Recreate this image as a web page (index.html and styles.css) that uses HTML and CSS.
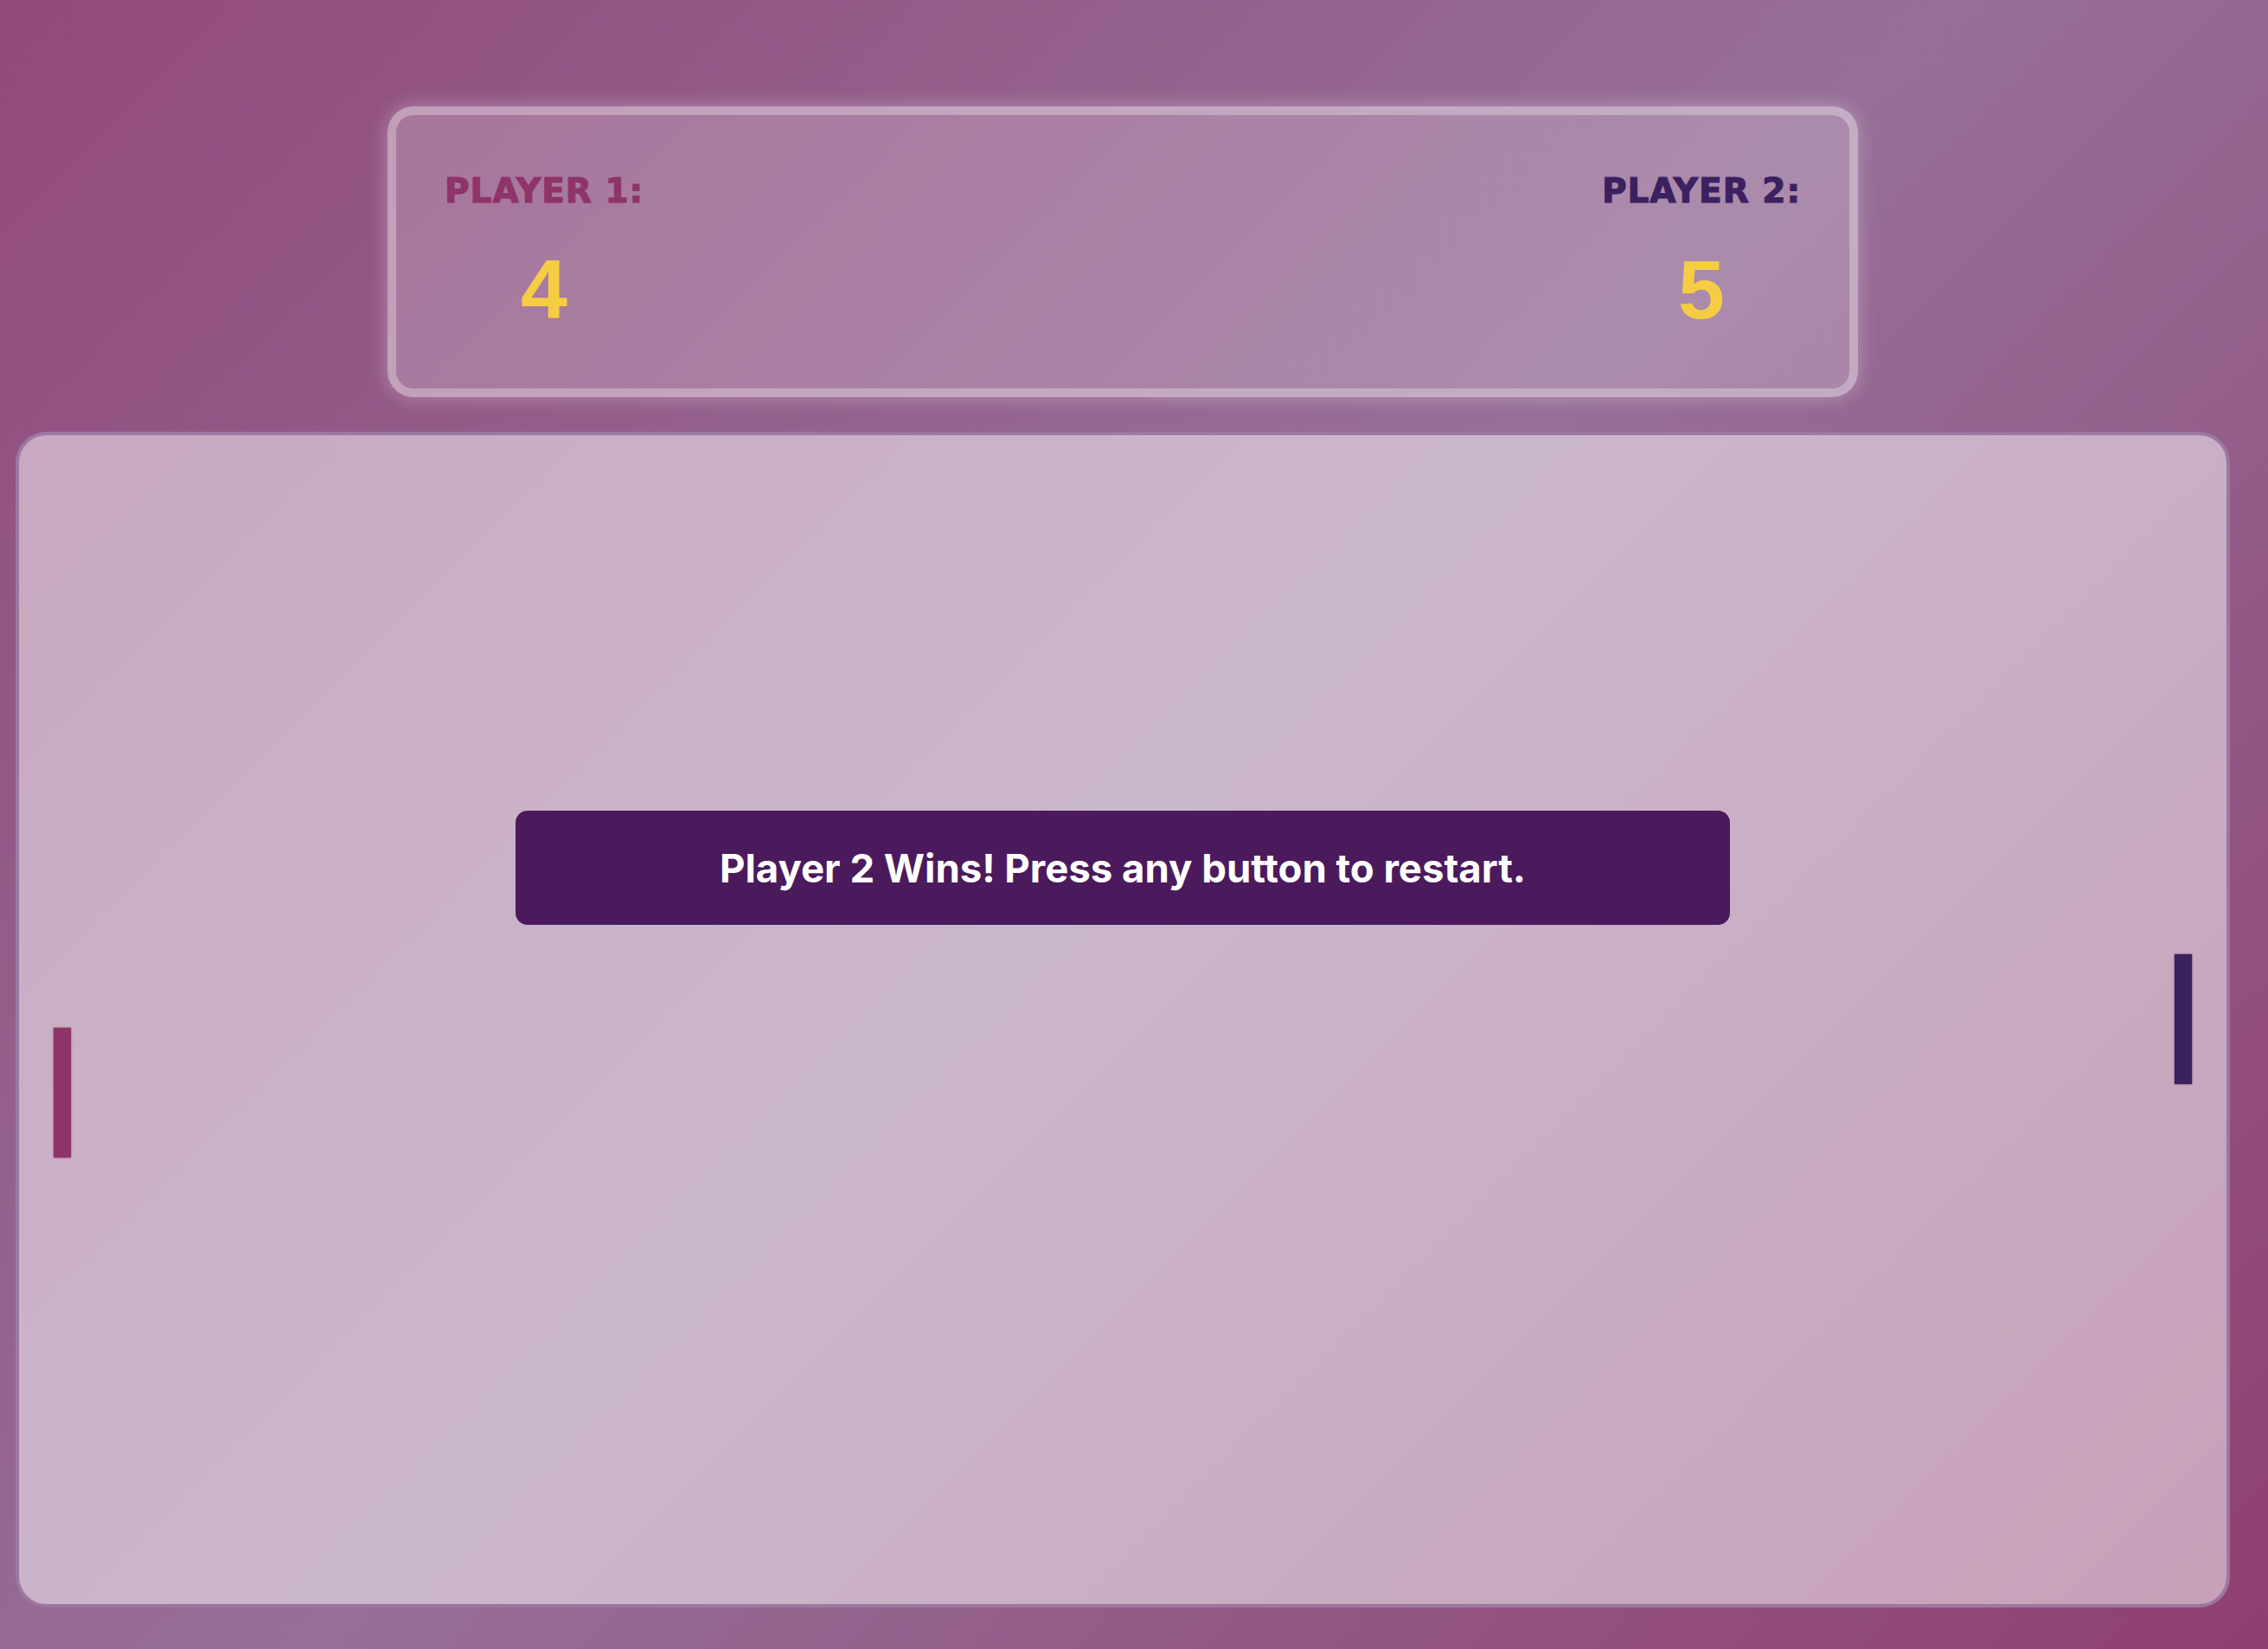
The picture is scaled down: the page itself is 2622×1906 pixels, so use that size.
FILE: index.html
```html
<!DOCTYPE html>
<html lang="en">
<head>
<meta charset="utf-8">
<title>Pong</title>
<link rel="stylesheet" href="styles.css">
</head>
<body>
<main class="page">
  <section class="scoreboard">
    <div class="player">
      <div class="label label-p1">PLAYER 1:</div>
      <div class="score">4</div>
    </div>
    <div class="player">
      <div class="label label-p2">PLAYER 2:</div>
      <div class="score">5</div>
    </div>
  </section>
  <section class="game">
    <div class="paddle paddle-left"></div>
    <div class="paddle paddle-right"></div>
    <div class="banner">Player 2 Wins! Press any button to restart.</div>
  </section>
</main>
</body>
</html>
```
FILE: styles.css
```css
html, body {
  margin: 0;
  padding: 0;
}
body {
  width: 100vw;
  height: 100vh;
  overflow: hidden;
  background: linear-gradient(135deg, #914a7b 0%, #966f98 50%, #8f3f70 100%);
  font-family: "Liberation Sans", Arial, sans-serif;
}
.page {
  display: flex;
  flex-direction: column;
  align-items: center;
  padding: 123px 26px 0 0;
  gap: 40px;
}
.scoreboard {
  box-sizing: border-box;
  width: 1700px;
  height: 336px;
  border: 10px solid rgba(255, 255, 255, 0.3);
  border-radius: 30px;
  background: rgba(255, 255, 255, 0.2);
  box-shadow: 0 0 22px rgba(255, 255, 255, 0.3);
  display: flex;
  justify-content: space-between;
  padding: 68px 56px 0 56px;
}
.player {
  display: flex;
  flex-direction: column;
  align-items: center;
}
.label {
  font-family: "DejaVu Sans", sans-serif;
  font-weight: 700;
  font-size: 39px;
  line-height: 40px;
  letter-spacing: 1px;
  -webkit-text-stroke: 1.2px currentColor;
}
.label-p1 { color: #8e3468; }
.label-p2 { color: #3c2160; }
.score {
  margin-top: 46px;
  font-family: "Liberation Sans", Arial, sans-serif;
  font-weight: 700;
  font-size: 97px;
  line-height: 96px;
  color: #f6cd42;
}
.game {
  position: relative;
  box-sizing: border-box;
  width: 2560px;
  height: 1359px;
  border: 4px solid #9b78a1;
  border-radius: 36px;
  background: rgba(255, 255, 255, 0.5);
}
.paddle {
  position: absolute;
  width: 20px;
  height: 150px;
}
.paddle-left {
  left: 40px;
  top: 685px;
  background: #8e3468;
  box-shadow: 0 0 2px #8e3468;
}
.paddle-right {
  right: 40px;
  top: 600px;
  background: #3c2160;
  box-shadow: 0 0 2px #3c2160;
}
.banner {
  position: absolute;
  top: 434px;
  left: 50%;
  transform: translateX(-50%);
  width: 1404px;
  height: 132px;
  border-radius: 14px;
  background: #4a1a5c;
  color: #ffffff;
  font-family: Inter, "Noto Sans", sans-serif;
  font-weight: 700;
  font-size: 45.5px;
  display: flex;
  align-items: center;
  justify-content: center;
}
```
